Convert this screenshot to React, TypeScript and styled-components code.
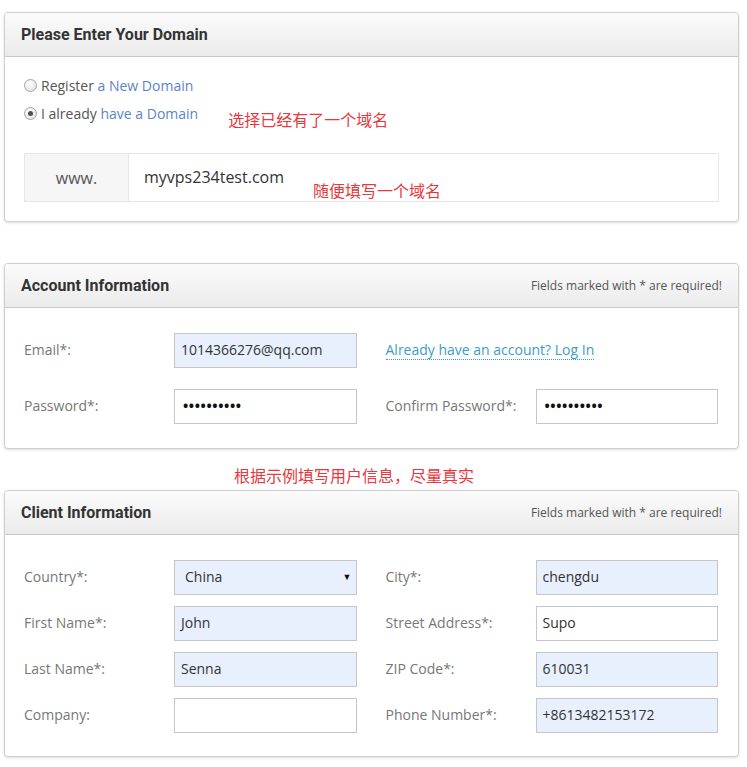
import styled, { createGlobalStyle } from 'styled-components';

const GlobalStyle = createGlobalStyle`
  body {
    margin: 0;
    background: #ffffff;
    font-family: 'Open Sans', 'Liberation Sans', sans-serif;
    color: #555;
  }
`;

const Page = styled.div`
  width: 735px;
  padding: 12px 8px 8px 4px;
`;

const Panel = styled.section`
  border: 1px solid #cfcfcf;
  border-radius: 4px;
  background: #fff;
  box-shadow: 0 1px 3px rgba(0, 0, 0, 0.14);
  overflow: hidden;
`;

const PanelHeader = styled.header`
  height: 43px;
  display: flex;
  align-items: center;
  justify-content: space-between;
  padding: 0 16px;
  background: linear-gradient(to bottom, #fbfbfb 0%, #ebebeb 100%);
  border-bottom: 1px solid #c9c9c9;
`;

const PanelTitle = styled.h3`
  margin: 0;
  font-family: Roboto, 'Liberation Sans', sans-serif;
  font-weight: 700;
  font-size: 16px;
  color: #333;
`;

const Required = styled.span`
  font-size: 12px;
  color: #555;
`;

const PanelBody = styled.div<{ $pad: string }>`
  padding: ${(p) => p.$pad};
`;

const RadioList = styled.div`
  display: flex;
  flex-direction: column;
  gap: 8px;
`;

const RadioRow = styled.div`
  display: flex;
  align-items: flex-start;
`;

const RadioLabel = styled.label`
  display: flex;
  align-items: center;
  gap: 4px;
  height: 20px;
  font-size: 14px;
  color: #555;
`;

const RadioDot = styled.span<{ $checked?: boolean }>`
  width: 11px;
  height: 11px;
  border-radius: 50%;
  border: 1px solid #a4a4a4;
  background: radial-gradient(circle at 40% 35%, #ffffff 0%, #dcdcdc 100%);
  display: flex;
  align-items: center;
  justify-content: center;
  &::after {
    content: '';
    width: 5px;
    height: 5px;
    border-radius: 50%;
    background: ${(p) => (p.$checked ? '#4f4f4f' : 'transparent')};
  }
`;

const SoftLink = styled.a`
  color: #5b85bf;
  text-decoration: none;
`;

const Note = styled.span`
  font-family: 'Noto Sans CJK SC', sans-serif;
  font-size: 16px;
  line-height: 20px;
  color: #e8373d;
  white-space: nowrap;
`;

const SideNote = styled(Note)`
  margin: 6px 0 0 30px;
`;

const DomainGroup = styled.div`
  position: relative;
  margin-top: 24px;
  height: 47px;
  display: flex;
  border: 1px solid #e6e6e6;
`;

const Prefix = styled.div`
  width: 103px;
  display: flex;
  align-items: center;
  justify-content: center;
  background: #f6f6f6;
  border-right: 1px solid #e6e6e6;
  font-size: 16px;
  color: #555;
`;

const DomainInput = styled.div`
  flex: 1;
  display: flex;
  align-items: center;
  padding: 0 0 2px 15px;
  font-size: 16px;
  color: #333;
`;

const OverNote = styled(Note)`
  position: absolute;
  left: 288px;
  top: 26px;
`;

const Gap = styled.div`
  height: 41px;
`;

const NoteGap = styled.div`
  height: 41px;
  box-sizing: border-box;
  padding: 16px 0 0 230px;
`;

const FieldGrid = styled.div<{ $rowGap: number }>`
  display: grid;
  grid-template-columns: 1fr 1fr;
  column-gap: 29px;
  row-gap: ${(p) => p.$rowGap}px;
`;

const Field = styled.div`
  display: grid;
  grid-template-columns: 150px 1fr;
  align-items: center;
`;

const FieldLabel = styled.label`
  font-size: 14px;
  color: #777;
  padding-bottom: 2px;
`;

const Input = styled.div<{ $filled?: boolean }>`
  box-sizing: border-box;
  height: 35px;
  display: flex;
  align-items: center;
  justify-content: space-between;
  padding: 0 8px 2px 6px;
  border: 1px solid #c6c6c6;
  background: ${(p) => (p.$filled ? '#e8f0fe' : '#fff')};
  font-size: 14px;
  color: #333;
`;

const Dots = styled.span`
  font-size: 14px;
  font-weight: 700;
  letter-spacing: 0.6px;
  color: #111;
  padding: 0 0 0 2px;
`;

const SelectInput = styled(Input)`
  padding: 0 4px 2px 10px;
`;

const Caret = styled.span`
  font-size: 9px;
  color: #111;
`;

const LoginCell = styled.div`
  display: flex;
  align-items: center;
`;

const LoginLink = styled.a`
  font-size: 14px;
  color: #3d9cc6;
  text-decoration: none;
  border-bottom: 1px dotted #3d9cc6;
  line-height: 18px;
`;

type FieldDef = { label: string; value?: string; filled?: boolean; password?: boolean; select?: boolean };

const FormField = ({ label, value, filled, password, select }: FieldDef) => (
  <Field>
    <FieldLabel>{label}</FieldLabel>
    {select ? (
      <SelectInput $filled={filled}>
        <span>{value}</span>
        <Caret>▼</Caret>
      </SelectInput>
    ) : (
      <Input $filled={filled}>{password ? <Dots>••••••••••</Dots> : value}</Input>
    )}
  </Field>
);

const clientFields: FieldDef[] = [
  { label: 'Country*:', value: 'China', filled: true, select: true },
  { label: 'City*:', value: 'chengdu', filled: true },
  { label: 'First Name*:', value: 'John', filled: true },
  { label: 'Street Address*:', value: 'Supo' },
  { label: 'Last Name*:', value: 'Senna', filled: true },
  { label: 'ZIP Code*:', value: '610031', filled: true },
  { label: 'Company:', value: '' },
  { label: 'Phone Number*:', value: '+8613482153172', filled: true },
];

export default function App() {
  return (
    <Page>
      <GlobalStyle />
      <Panel>
        <PanelHeader>
          <PanelTitle>Please Enter Your Domain</PanelTitle>
        </PanelHeader>
        <PanelBody $pad="18px 19px 19px 19px">
          <RadioList>
            <RadioRow>
              <RadioLabel>
                <RadioDot />
                <span>
                  Register <SoftLink>a New Domain</SoftLink>
                </span>
              </RadioLabel>
            </RadioRow>
            <RadioRow>
              <RadioLabel>
                <RadioDot $checked />
                <span>
                  I already <SoftLink>have a Domain</SoftLink>
                </span>
              </RadioLabel>
              <SideNote>选择已经有了一个域名</SideNote>
            </RadioRow>
          </RadioList>
          <DomainGroup>
            <Prefix>www.</Prefix>
            <DomainInput>myvps234test.com</DomainInput>
            <OverNote>随便填写一个域名</OverNote>
          </DomainGroup>
        </PanelBody>
      </Panel>

      <Gap />

      <Panel>
        <PanelHeader>
          <PanelTitle>Account Information</PanelTitle>
          <Required>Fields marked with * are required!</Required>
        </PanelHeader>
        <PanelBody $pad="25px 20px 24px 19px">
          <FieldGrid $rowGap={21}>
            <FormField label="Email*:" value="1014366276@qq.com" filled />
            <LoginCell>
              <LoginLink>Already have an account? Log In</LoginLink>
            </LoginCell>
            <FormField label="Password*:" password />
            <FormField label="Confirm Password*:" password />
          </FieldGrid>
        </PanelBody>
      </Panel>

      <NoteGap>
        <Note>根据示例填写用户信息，尽量真实</Note>
      </NoteGap>

      <Panel>
        <PanelHeader>
          <PanelTitle>Client Information</PanelTitle>
          <Required>Fields marked with * are required!</Required>
        </PanelHeader>
        <PanelBody $pad="25px 20px 23px 19px">
          <FieldGrid $rowGap={11}>
            {clientFields.map((f) => (
              <FormField key={f.label} {...f} />
            ))}
          </FieldGrid>
        </PanelBody>
      </Panel>
    </Page>
  );
}
